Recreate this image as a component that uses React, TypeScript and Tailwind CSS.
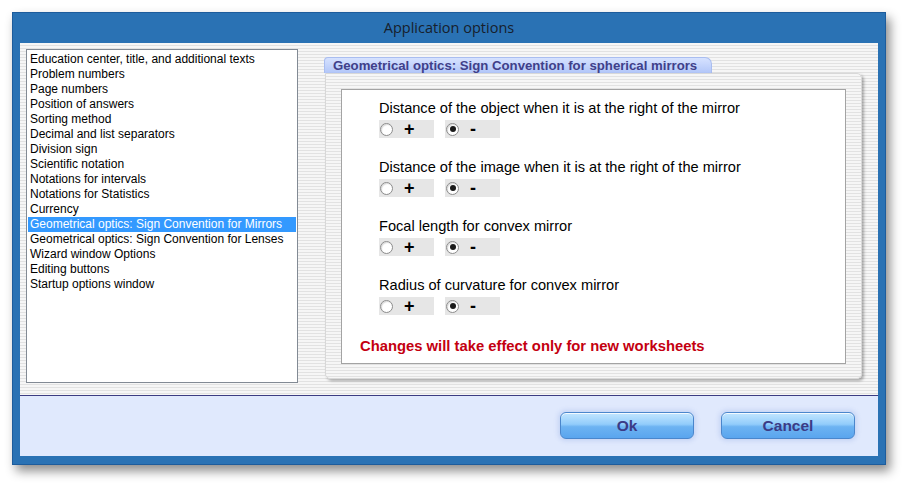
import React from "react"

const sections = [
  "Education center, title, and additional texts",
  "Problem numbers",
  "Page numbers",
  "Position of answers",
  "Sorting method",
  "Decimal and list separators",
  "Division sign",
  "Scientific notation",
  "Notations for intervals",
  "Notations for Statistics",
  "Currency",
  "Geometrical optics: Sign Convention for Mirrors",
  "Geometrical optics: Sign Convention for Lenses",
  "Wizard window Options",
  "Editing buttons",
  "Startup options window",
]

const settings = [
  "Distance of the object when it is at the right of the mirror",
  "Distance of the image when it is at the right of the mirror",
  "Focal length for convex mirror",
  "Radius of curvature for convex mirror",
]

const stripes =
  "bg-[repeating-linear-gradient(to_bottom,#f6f6f6_0px,#f6f6f6_2px,#e2e2e2_2px,#e2e2e2_3px)]"

function Radio({ checked }: { checked?: boolean }) {
  return (
    <span className="w-[13px] h-[13px] rounded-full border border-[#8c8c8c] bg-white flex items-center justify-center shadow-[inset_1px_1px_1px_rgba(0,0,0,0.15)]">
      {checked && <span className="w-[6px] h-[6px] rounded-full bg-[#1a1a1a]" />}
    </span>
  )
}

function SignOption({ sign, checked }: { sign: string; checked?: boolean }) {
  return (
    <div className="w-[55px] h-[18px] bg-[#e6e6e6] flex items-center pl-[1px] gap-[11px]">
      <Radio checked={checked} />
      <span className="text-[18px] font-bold leading-none text-black">{sign}</span>
    </div>
  )
}

function Button({ label }: { label: string }) {
  return (
    <button className="w-[134px] h-[27px] rounded-[6px] border border-[#4a86cc] bg-[linear-gradient(to_bottom,#c2e6ff_0%,#92ccfb_45%,#6db3f2_55%,#5aa5ee_100%)] shadow-[0_0_4px_2px_rgba(120,150,220,0.25),inset_0_1px_0_rgba(255,255,255,0.8)] text-[15.5px] font-bold text-[#3b3b86]">
      {label}
    </button>
  )
}

export default function App() {
  return (
    <div className="w-[906px] h-[485px] bg-white pt-[12px] pl-[12px] font-['Liberation_Sans',Arial,sans-serif]">
      <div className="w-[874px] h-[453px] bg-[#2a72b4] border border-[#1d5c9c] flex flex-col shadow-[4px_6px_10px_rgba(0,0,0,0.45)]">
        {/* title bar */}
        <div className="h-[30px] flex items-center justify-center text-[14.5px] text-[#17202c] font-['Open_Sans','Noto_Sans',sans-serif]">
          Application options
        </div>

        {/* client area */}
        <div className="mx-[7px] h-[413px] flex flex-col">
          <div className={`h-[352px] flex pl-[6px] pt-[6px] ${stripes}`}>
            {/* section list */}
            <div className="w-[272px] h-[334px] bg-white border border-[#828a94] pt-[2px]">
              {sections.map((s, i) => (
                <div
                  key={s}
                  className={`mx-[1px] pl-[2px] h-[15px] leading-[15px] text-[12px] ${
                    i === 11 ? "bg-[#3399ff] text-white" : "text-black"
                  }`}
                >
                  {s}
                </div>
              ))}
            </div>

            {/* options page */}
            <div className="ml-[26px] mt-[8px] w-[538px] flex flex-col">
              <div className="w-[388px] h-[16px] rounded-t-[4px] rounded-tr-[7px] border border-b-0 border-[#a9bdf0] bg-[linear-gradient(to_bottom,#d6e2ff,#b2c6f8)] pl-[8px] text-[13.2px] font-bold leading-[15px] text-[#40408a]">
                Geometrical optics: Sign Convention for spherical mirrors
              </div>
              <div
                className={`ml-[1px] w-[537px] h-[306px] rounded-[5px] rounded-tl-none border border-[#d8d8d8] p-[15px] shadow-[2px_2px_3px_rgba(0,0,0,0.3)] ${stripes}`}
              >
                <div className="h-[275px] bg-white border border-[#a3a3a3] pl-[18px] pt-[10px]">
                  <div className="pl-[19px] flex flex-col gap-[21px]">
                    {settings.map((s) => (
                      <div key={s} className="flex flex-col gap-[4px]">
                        <div className="text-[14.6px] leading-[16px] text-black">{s}</div>
                        <div className="flex gap-[11px]">
                          <SignOption sign="+" />
                          <SignOption sign="-" checked />
                        </div>
                      </div>
                    ))}
                  </div>
                  <div className="mt-[23px] text-[14.8px] font-bold leading-[16px] text-[#c40010]">
                    Changes will take effect only for new worksheets
                  </div>
                </div>
              </div>
            </div>
          </div>

          {/* footer */}
          <div className="h-[1px] bg-[#3c3c82]" />
          <div className="flex-1 bg-[#e0e9fd] flex justify-end items-start pt-[16px] pr-[23px] gap-[27px]">
            <Button label="Ok" />
            <Button label="Cancel" />
          </div>
        </div>
      </div>
    </div>
  )
}
